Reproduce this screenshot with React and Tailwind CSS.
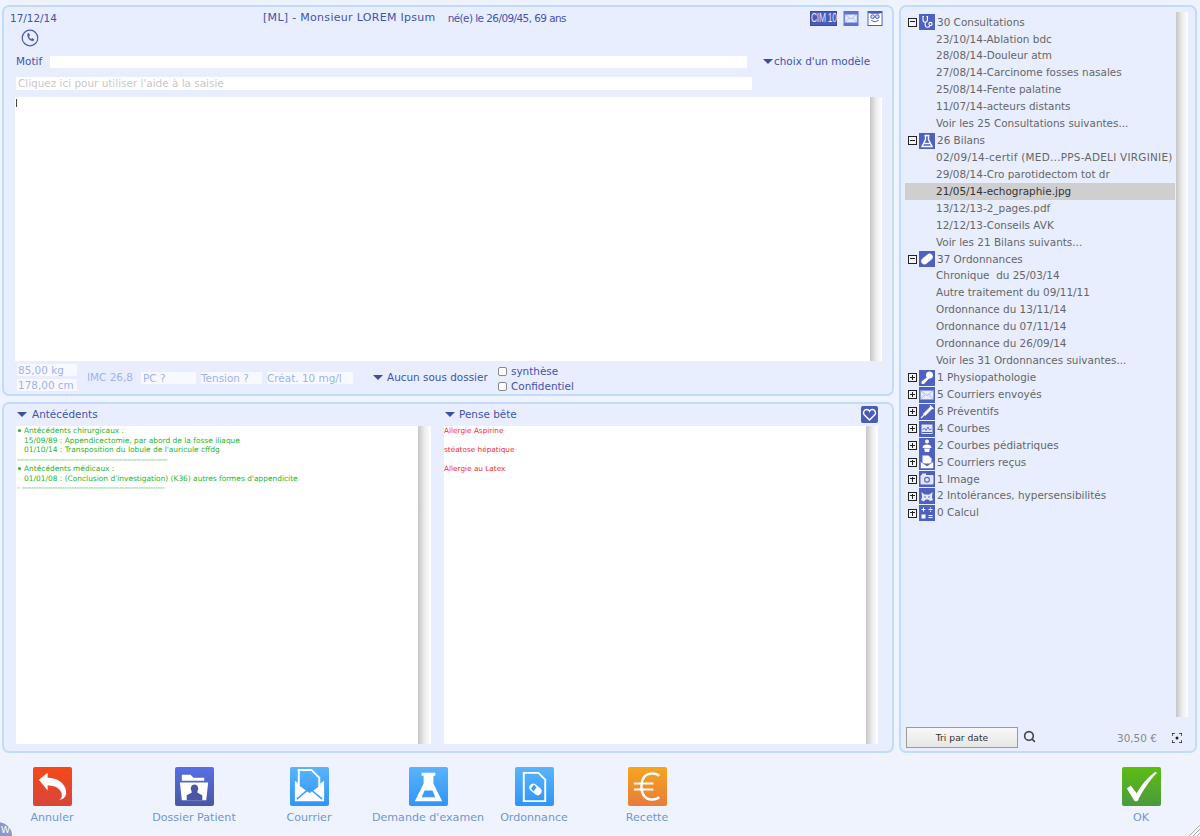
import React from "react";
import { Search } from "lucide-react";

const Tri = ({ className = "" }) => (
  <span className={"inline-block w-0 h-0 border-l-[5px] border-r-[5px] border-t-[5px] border-l-transparent border-r-transparent border-t-[#3f4f9f] " + className} />
);

const Bar = ({ className = "" }) => (
  <div className={"w-[12px] shrink-0 bg-gradient-to-r from-[#c6c6c6] via-[#ececec] to-white " + className} />
);

const glyphs = {
  steth: <g fill="none" stroke="#fff" strokeWidth="1.1"><path d="M5 2.500H4v3.300c0 1.600 1 2.500 2.200 2.500s2.200-.9 2.200-2.500V2.500h-1" /><path d="M6.200 8.300v2.700c0 2.800 3.800 3 4.600.8" /><circle cx="11.500" cy="10" r="1.600" /></g>,
  flask: <g fill="none" stroke="#fff" strokeWidth="1.4"><path d="M5.500 2.500h5M6.500 2.500v4L3 13.500h10L9.500 6.500v-4" /><path d="M5 10.500h6" /></g>,
  pill: <g><rect x="1.500" y="4.700" width="13" height="6.600" rx="3.300" fill="#fff" transform="rotate(-40 8 8)" /></g>,
  key: <g fill="#fff"><circle cx="10.500" cy="5" r="3.500" /><path d="M9 6.500l1.500 1.500L5 14H2.500v-2.500z" /></g>,
  mail: <g fill="#e6ebfc" stroke="#8a9be0" strokeWidth=".6"><rect x="1.500" y="3.500" width="13" height="9" /><path d="M1.500 3.500L8 8.500l6.500-5M1.500 12.500L6 7.500M14.500 12.500L10 7.500" fill="none" /></g>,
  syringe: <g stroke="#fff" fill="none"><path d="M12.500 3.500L5 11" strokeWidth="3" /><path d="M5 11L2 14M11 1.500l3.500 3.500" strokeWidth="1.200" /></g>,
  chart: <g><rect x="2" y="3" width="12" height="10.500" fill="#dfe6fb" stroke="#4a5bb8" /><path d="M3.500 9l2-2 1.500 2.500L9 6l1.500 3 2-1" stroke="#4a5bb8" fill="none" strokeWidth=".8" /><path d="M3 11.500h10" stroke="#4a5bb8" /></g>,
  baby: <g fill="#fff"><circle cx="8" cy="3.500" r="2" /><path d="M3.500 10c0-2.500 2-3.500 4.500-3.500s4.500 1 4.500 3.500z" /><path d="M5 10.500h6l-1 3.500H6z" /></g>,
  recv: <g fill="#fff"><path d="M3.500 1.500h6l3 3v5h-9z" /><path d="M1.500 7.500L8 12l6.500-4.500v7h-13z" stroke="#4a5bb8" strokeWidth=".5" /></g>,
  camera: <g><rect x="1.500" y="4" width="13" height="9.500" rx="1" fill="#dfe6fb" /><circle cx="8" cy="8.700" r="3" fill="#5a6cc4" /><circle cx="8" cy="8.700" r="1.800" fill="#dfe6fb" /><rect x="3" y="2.500" width="4" height="2" fill="#dfe6fb" /></g>,
  cat: <g fill="#e6ebfc"><path d="M2.500 4l3 2.500h5l3-2.500-.5 5.500 1 2.500-3 1-1.500-1.500h-3L5 13.500l-3-1.500 1-2.500z" /><circle cx="6" cy="9" r=".8" fill="#4a5bb8" /><circle cx="10" cy="9" r=".8" fill="#4a5bb8" /></g>,
  calc: <g fill="#fff"><path d="M2.500 4h4v1h-4zM4 2.500h1v4H4zM9.500 4h4v1h-4zM2.500 9.500h4v4h-4zM9.500 10h4v1h-4zM9.500 12h4v1h-4z" /><circle cx="11.500" cy="2.800" r=".6" /><circle cx="11.500" cy="6.200" r=".6" /></g>,
};

const Tile = ({ g }) => (
  <svg width="16" height="16" viewBox="0 0 16 16" className="shrink-0">
    <rect width="16" height="16" fill="#4f61c0" />
    {glyphs[g]}
  </svg>
);

const Toggle = ({ open }) => (
  <span className="relative w-[9px] h-[9px] border-[1.5px] border-[#222] bg-[#f3f3f3] shrink-0 mr-[2px]">
    <span className="absolute left-[1px] right-[1px] top-[2.500px] h-px bg-[#222]" />
    {!open && <span className="absolute top-[1px] bottom-[1px] left-[2.500px] w-px bg-[#222]" />}
  </span>
);

const Group = ({ icon, label, open }) => (
  <div className="h-[16.93px] flex items-center pl-[3px] whitespace-nowrap">
    <Toggle open={open} />
    <Tile g={icon} />
    <span className="ml-[2px]">{label}</span>
  </div>
);

const Leaf = ({ children, selected, className = "" }) => (
  <div className={"h-[16.93px] flex items-center pl-[31px] whitespace-nowrap " + (selected ? "bg-[#cfcfcf] text-[#333] " : "") + className}>{children}</div>
);

const ToolTile = ({ children }) => (
  <svg width="39" height="39" viewBox="0 0 40 40" className="rounded-[2px]">{children}</svg>
);

const Tool = ({ label, className, children }) => (
  <div className={"flex flex-col items-center " + className}>
    {children}
    <span className="mt-[5px] text-[11.1px] leading-[14px] text-[#6f97cf] whitespace-nowrap">{label}</span>
  </div>
);

export default function App() {
  return (
    <div className="relative w-[1200px] h-[836px] overflow-hidden bg-[#eff3fe] font-['DejaVu_Sans',sans-serif] text-[10.45px] text-[#4253ad]">
      <div className="flex h-[767px] pt-[5px] pb-[14px] pl-[2px] gap-[5px]">
        {/* left column */}
        <div className="w-[892px] flex flex-col gap-[6px]">
          <section className="h-[391px] border-2 border-[#c3dbfb] rounded-[7px] bg-[#e8eefe] pt-[1px] pl-[11px] pr-[9px] flex flex-col">
            <div className="flex items-start h-[33px]">
              <div className="w-[253px] -ml-[5px] pt-[3px] leading-[14px]">17/12/14</div>
              <div className="pt-[3px] leading-[14px] whitespace-nowrap flex">
                <span className="text-[11px] tracking-[0.3px]">[ML] - Monsieur LOREM Ipsum</span>
                <span className="ml-[12px] tracking-[-0.55px]">né(e) le 26/09/45, 69 ans</span>
              </div>
              <div className="ml-auto flex items-start gap-[6px] pt-[3px]">
                <span className="w-[27px] h-[15px] bg-[#4a5bb8] border border-[#3a4a9e] text-[#dfe6fb] text-[8.5px] leading-[13px] text-center font-['Liberation_Sans',sans-serif] tracking-[-0.3px] whitespace-nowrap"><span className="inline-block scale-y-[1.4]">CIM 10</span></span>
                <svg width="16" height="15" viewBox="0 0 16 16"><rect width="16" height="16" fill="#6072cc" />{glyphs.mail}</svg>
                <svg width="16" height="15" viewBox="0 0 16 16" className="ml-[2px]"><rect width="16" height="16" fill="#4a5bb8" /><path d="M1 2l3 1h8l3-1v13H1z" fill="#fff" /><circle cx="5.500" cy="6" r="2" fill="#cfd8f8" stroke="#4a5bb8" /><circle cx="10.500" cy="6" r="2" fill="#cfd8f8" stroke="#4a5bb8" /><path d="M4 10q4 3 8 0" fill="none" stroke="#4a5bb8" /></svg>
              </div>
            </div>
            <div className="h-[14px] -mt-[11px] pl-[6px]">
              <svg width="18" height="18" viewBox="0 0 18 18" className="-mt-[1px]"><circle cx="9" cy="9" r="7.800" fill="none" stroke="#4a5bb8" strokeWidth="1.200" /><path d="M6.500 4.500l1.500-.5 1 2.500-1 1c.3 1.200 1 2 2.200 2.500l1-1 2 1.500-.7 1.500c-3.500.5-7-3.500-6-7.500z" fill="#4a5bb8" /></svg>
            </div>
            <div className="flex items-center h-[13px] mt-[11px]">
              <span className="w-[35px] pl-[1px]">Motif</span>
              <div className="w-[697px] h-[12px] bg-white" />
              <Tri className="ml-[16px] mr-[1px]" />
              <span>choix d'un modèle</span>
            </div>
            <div className="w-[736px] h-[13px] mt-[9px] ml-[1px] bg-white pl-[2px] text-[#c8c8c8] leading-[13px]">Cliquez ici pour utiliser l'aide à la saisie</div>
            <div className="h-[264px] mt-[7px] flex">
              <div className="w-[855px] bg-white"><div className="w-px h-[8px] bg-[#444] mt-[2px] ml-[1px]" /></div>
              <Bar />
            </div>
            <div className="flex flex-1 items-start text-[#9fb2f0] pt-[3px] ml-[2px]">
              <div className="w-[60px] flex flex-col gap-[3px]">
                <div className="h-[12px] bg-[#f7f9ff] leading-[12px] pl-[1px]">85,00 kg</div>
                <div className="h-[12px] bg-[#f7f9ff] leading-[12px] pl-[1px]">178,00 cm</div>
              </div>
              <div className="flex items-center mt-[6px]">
                <span className="ml-[10px] w-[54px]">IMC 26,8</span>
                <span className="w-[55px] h-[12px] bg-[#f7f9ff] leading-[12px] pl-[2px]">PC ?</span>
                <span className="ml-[5px] w-[61px] h-[12px] bg-[#f7f9ff] leading-[12px]">Tension ?</span>
                <span className="ml-[5px] w-[86px] h-[12px] bg-[#f7f9ff] leading-[12px]">Créat. 10 mg/l</span>
                <Tri className="ml-[20px] mr-[4px]" />
                <span className="text-[#4253ad] whitespace-nowrap w-[100px]">Aucun sous dossier</span>
              </div>
              <div className="ml-[11px] mt-[1px] flex flex-col gap-[2px] text-[#4253ad]">
                {["synthèse", "Confidentiel"].map((t) => (
                  <label key={t} className="flex items-center h-[13px] gap-[4px] leading-[13px]">
                    <span className="w-[9px] h-[9px] rounded-[2px] border border-[#888] bg-white" />
                    {t}
                  </label>
                ))}
              </div>
            </div>
          </section>

          <section className="flex-1 border-2 border-[#c3dbfb] rounded-[7px] bg-[#e8eefe] pl-[12px] pr-[14px] pb-[7px] flex min-h-0">
            <div className="w-[415px] flex flex-col mr-[13px]">
              <div className="h-[22px] flex items-center pl-[1px] pb-[1px] shrink-0"><Tri className="mr-[5px]" /><span>Antécédents</span></div>
              <div className="flex-1 flex">
                <div className="flex-1 bg-white pl-[1px] text-[7.45px] leading-[9.5px] text-[#27b327] whitespace-nowrap">
                  <div className="flex items-center"><span className="w-[3px] h-[3px] rounded-full bg-[#27b327] ml-[1px] mr-[3px]" />Antécédents chirurgicaux :</div>
                  <div className="pl-[7px]">15/09/89 : Appendicectomie, par abord de la fosse iliaque</div>
                  <div className="pl-[7px]">01/10/14 : Transposition du lobule de l'auricule cffdg</div>
                  <div className="tracking-[-0.3px]">---------------------------------------------------------------</div>
                  <div className="flex items-center"><span className="w-[3px] h-[3px] rounded-full bg-[#27b327] ml-[1px] mr-[3px]" />Antécédents médicaux :</div>
                  <div className="pl-[7px]">01/01/08 : (Conclusion d'investigation) (K36) autres formes d'appendicite</div>
                  <div className="tracking-[-0.3px]">- ------------------------------------------------------------</div>
                </div>
                <Bar className="!w-[13px]" />
              </div>
            </div>
            <div className="flex-1 flex flex-col">
              <div className="h-[22px] flex items-center pl-[1px] pb-[1px] shrink-0">
                <Tri className="mr-[4px]" /><span>Pense bête</span>
                <svg width="17" height="17" viewBox="0 0 17 17" className="ml-auto"><rect width="17" height="17" rx="2" fill="#4a5bb8" /><path d="M8.500 14L3 8.500C1.500 6 3.500 3.500 5.700 3.500c1.300 0 2.300.8 2.800 1.800.5-1 1.500-1.800 2.800-1.800 2.200 0 4.200 2.500 2.700 5z" fill="none" stroke="#fff" strokeWidth="1.400" /></svg>
              </div>
              <div className="flex-1 flex">
                <div className="flex-1 bg-white text-[7.3px] leading-[9.5px] text-[#f03030] whitespace-nowrap">
                  <div>Allergie Aspirine</div>
                  <div className="mt-[9.5px]">stéatose hépatique</div>
                  <div className="mt-[9.5px]">Allergie au Latex</div>
                </div>
                <Bar />
              </div>
            </div>
          </section>
        </div>

        {/* right column */}
        <section className="w-[298px] border-2 border-[#c3dbfb] rounded-[7px] bg-[#e8eefe] flex flex-col text-[#666] pl-[4px] pr-[6px]">
          <div className="flex flex-1 min-h-0">
            <div className="w-[270px] pt-[7px]">
              <Group open icon="steth" label="30 Consultations" />
              <Leaf>23/10/14-Ablation bdc</Leaf>
              <Leaf>28/08/14-Douleur atm</Leaf>
              <Leaf>27/08/14-Carcinome fosses nasales</Leaf>
              <Leaf>25/08/14-Fente palatine</Leaf>
              <Leaf>11/07/14-acteurs distants</Leaf>
              <Leaf>Voir les 25 Consultations suivantes...</Leaf>
              <Group open icon="flask" label="26 Bilans" />
              <Leaf className="tracking-[0.26px]">02/09/14-certif (MED...PPS-ADELI VIRGINIE)</Leaf>
              <Leaf>29/08/14-Cro parotidectom tot dr</Leaf>
              <Leaf selected>21/05/14-echographie.jpg</Leaf>
              <Leaf>13/12/13-2_pages.pdf</Leaf>
              <Leaf>12/12/13-Conseils AVK</Leaf>
              <Leaf>Voir les 21 Bilans suivants...</Leaf>
              <Group open icon="pill" label="37 Ordonnances" />
              <Leaf>Chronique&nbsp; du 25/03/14</Leaf>
              <Leaf>Autre traitement du 09/11/11</Leaf>
              <Leaf>Ordonnance du 13/11/14</Leaf>
              <Leaf>Ordonnance du 07/11/14</Leaf>
              <Leaf>Ordonnance du 26/09/14</Leaf>
              <Leaf>Voir les 31 Ordonnances suivantes...</Leaf>
              <Group icon="key" label="1 Physiopathologie" />
              <Group icon="mail" label="5 Courriers envoyés" />
              <Group icon="syringe" label="6 Préventifs" />
              <Group icon="chart" label="4 Courbes" />
              <Group icon="baby" label="2 Courbes pédiatriques" />
              <Group icon="recv" label="5 Courriers reçus" />
              <Group icon="camera" label="1 Image" />
              <Group icon="cat" label="2 Intolérances, hypersensibilités" />
              <Group icon="calc" label="0 Calcul" />
            </div>
            <Bar className="ml-[1px] mt-[5px] mb-[10px]" />
          </div>
          <div className="h-[24px] flex items-start shrink-0">
            <button className="w-[112px] h-[21px] ml-[1px] border border-[#9a9a9a] bg-gradient-to-b from-[#f8f8f8] to-[#e6e6e6] text-[9.2px] leading-[19px] text-[#333]">Tri par date</button>
            <Search size={13} strokeWidth={3} className="ml-[5px] mt-[3px] text-[#444]" />
            <span className="ml-[81px] mt-[4px] text-[#888] whitespace-nowrap">30,50 €</span>
            <svg width="10" height="10" viewBox="0 0 10 10" className="ml-[15px] mt-[6px]"><path d="M0 3V0h3M7 0h3v3M10 7v3H7M3 10H0V7" fill="none" stroke="#222" strokeWidth="1.400" /><circle cx="5" cy="5" r="1.500" fill="#222" /></svg>
          </div>
        </section>
      </div>

      {/* toolbar */}
      <div className="flex items-start pl-[12px] pr-[19px]">
        <Tool label="Annuler" className="w-[80px]">
          <ToolTile>
            <defs><linearGradient id="r" x1="0" y1="0" x2="0" y2="1"><stop offset="0" stopColor="#f6481a" /><stop offset="1" stopColor="#d6463a" /></linearGradient></defs>
            <rect width="40" height="40" fill="url(#r)" />
            <path d="M6 13L15 6v5c10 0 19 6 19 15 0 4-2 7-7 8 3-2 3-5 2-8-2-5-8-7-14-7v5z" fill="#fff" />
          </ToolTile>
        </Tool>
        <Tool label="Dossier Patient" className="w-[90px] ml-[57px]">
          <ToolTile>
            <defs><linearGradient id="b" x1="0" y1="0" x2="0" y2="1"><stop offset="0" stopColor="#5670e6" /><stop offset="1" stopColor="#4a57a4" /></linearGradient></defs>
            <rect width="40" height="40" fill="url(#b)" />
            <path d="M7 8h9l3 3h11v3H7z" fill="#fff" />
            <path d="M5 16h29l-2 18H7z" fill="#fff" />
            <path d="M20 18a4 4 0 0 1 3 6.500v2l5 2.500v5H12v-5l5-2.500v-2A4 4 0 0 1 20 18z" fill="#4a57a4" />
          </ToolTile>
        </Tool>
        <Tool label="Courrier" className="w-[80px] ml-[30px]">
          <ToolTile>
            <defs><linearGradient id="c" x1="0" y1="0" x2="0" y2="1"><stop offset="0" stopColor="#59b4fb" /><stop offset="1" stopColor="#2f95f8" /></linearGradient></defs>
            <rect width="40" height="40" fill="url(#c)" />
            <path d="M9 3h13l8 8v10L20 28 9 20z" fill="none" stroke="#fff" strokeWidth="2" />
            <path d="M5 14l4 3v4l11 7 11-7v-4l4-3v21H5z" fill="#fff" />
            <path d="M7 33l13-11 13 11" fill="none" stroke="#3a9cf8" strokeWidth="1.500" />
          </ToolTile>
        </Tool>
        <Tool label="Demande d'examen" className="w-[120px] ml-[19px]">
          <ToolTile>
            <rect width="40" height="40" fill="url(#c)" />
            <path d="M13 6h14v3h-2v8l9 18H6l9-18V9h-2z" fill="#fff" />
            <path d="M16 24h8l3 7H13z" fill="#3a9cf8" />
          </ToolTile>
        </Tool>
        <Tool label="Ordonnance" className="w-[80px] ml-[6px]">
          <ToolTile>
            <rect width="40" height="40" fill="url(#c)" />
            <path d="M9 6h15l7 7v22H9z" fill="none" stroke="#fff" strokeWidth="2" />
            <rect x="14" y="19" width="14" height="8" rx="4" fill="#fff" transform="rotate(40 21 23)" />
            <path d="M19.500 18l-3 4 2.500 3 3-4z" fill="#3a9cf8" />
          </ToolTile>
        </Tool>
        <Tool label="Recette" className="w-[80px] ml-[33px]">
          <ToolTile>
            <defs><linearGradient id="o" x1="0" y1="0" x2="0" y2="1"><stop offset="0" stopColor="#f8a41e" /><stop offset="1" stopColor="#e67c3c" /></linearGradient></defs>
            <rect width="40" height="40" fill="url(#o)" />
            <path d="M32 9c-3-3-12-4-16 2-3 5-3 13 0 18 4 6 13 5 16 2" fill="none" stroke="#fff" strokeWidth="2.500" />
            <path d="M6 17h20M6 23h20" stroke="#fff" strokeWidth="2" />
          </ToolTile>
        </Tool>
        <Tool label="OK" className="w-[80px] ml-auto">
          <ToolTile>
            <defs><linearGradient id="g" x1="0" y1="0" x2="0" y2="1"><stop offset="0" stopColor="#5cbd12" /><stop offset="1" stopColor="#4b9a3e" /></linearGradient></defs>
            <rect width="40" height="40" fill="url(#g)" />
            <path d="M5 22l4-3 6 8C20 18 27 10 34 5l2 1C28 14 21 25 16 35h-3z" fill="#fff" />
          </ToolTile>
        </Tool>
      </div>

      <div className="absolute -left-[16px] -bottom-[14px] w-[28px] h-[28px] rounded-full bg-[#8a9ac8] text-white text-[9px] leading-[14px] pl-[17px] pt-[1px]">W</div>
      <svg width="13" height="13" viewBox="0 0 13 13" className="absolute right-0 bottom-0"><path d="M0 13L13 0v13z" fill="#f8f8f8" /><path d="M2 13L13 2M6 13l7-7M10 13l3-3" stroke="#aaa" /></svg>
    </div>
  );
}
